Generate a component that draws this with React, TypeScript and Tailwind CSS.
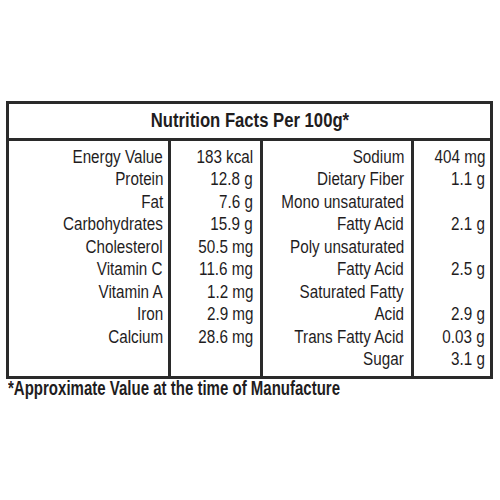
const left = [
  ["Energy Value", "183 kcal"],
  ["Protein", "12.8 g"],
  ["Fat", "7.6 g"],
  ["Carbohydrates", "15.9 g"],
  ["Cholesterol", "50.5 mg"],
  ["Vitamin C", "11.6 mg"],
  ["Vitamin A", "1.2 mg"],
  ["Iron", "2.9 mg"],
  ["Calcium", "28.6 mg"],
  ["", ""],
];

const right = [
  ["Sodium", "404 mg"],
  ["Dietary Fiber", "1.1 g"],
  ["Mono unsaturated", ""],
  ["Fatty Acid", "2.1 g"],
  ["Poly unsaturated", ""],
  ["Fatty Acid", "2.5 g"],
  ["Saturated Fatty", ""],
  ["Acid", "2.9 g"],
  ["Trans Fatty Acid", "0.03 g"],
  ["Sugar", "3.1 g"],
];

// condensed look: Liberation Sans squeezed horizontally
const Col = ({ items, className }: { items: string[]; className: string }) => (
  <div className={`flex flex-col pt-[5px] pb-[6px] text-right ${className}`}>
    {items.map((t, i) => (
      <div key={i} className="h-[22.45px] leading-[22.45px] whitespace-nowrap">
        <span className="inline-block origin-right scale-x-[0.87]">{t}</span>
      </div>
    ))}
  </div>
);

export default function App() {
  return (
    <div
      className="w-[500px] h-[500px] bg-white pt-[101px] pl-[6px] text-[#1f1d1e]"
      style={{ fontFamily: "'Liberation Sans', Arial, sans-serif" }}
    >
      <div className="w-[487px] border-[3px] border-[#2a2a2a]">
        <div className="h-[37px] border-b-[3px] border-[#2a2a2a] flex items-center justify-center text-[19.5px] font-bold">
          <span className="inline-block scale-x-[0.855]">Nutrition Facts Per 100g*</span>
        </div>
        <div className="flex text-[17.5px]">
          <Col items={left.map((r) => r[0])} className="w-[162px] pr-[5px] border-r-[3px] border-[#2a2a2a]" />
          <Col items={left.map((r) => r[1])} className="w-[92px] pr-[7px] border-r-[3px] border-[#2a2a2a]" />
          <Col items={right.map((r) => r[0])} className="w-[151px] pr-[7px] border-r-[3px] border-[#2a2a2a]" />
          <Col items={right.map((r) => r[1])} className="w-[76px] pr-[5px]" />
        </div>
      </div>
      <p className="pl-[2px] text-[19.5px] leading-none font-bold whitespace-nowrap">
        <span className="inline-block origin-left scale-x-[0.77]">*Approximate Value at the time of Manufacture</span>
      </p>
    </div>
  );
}
